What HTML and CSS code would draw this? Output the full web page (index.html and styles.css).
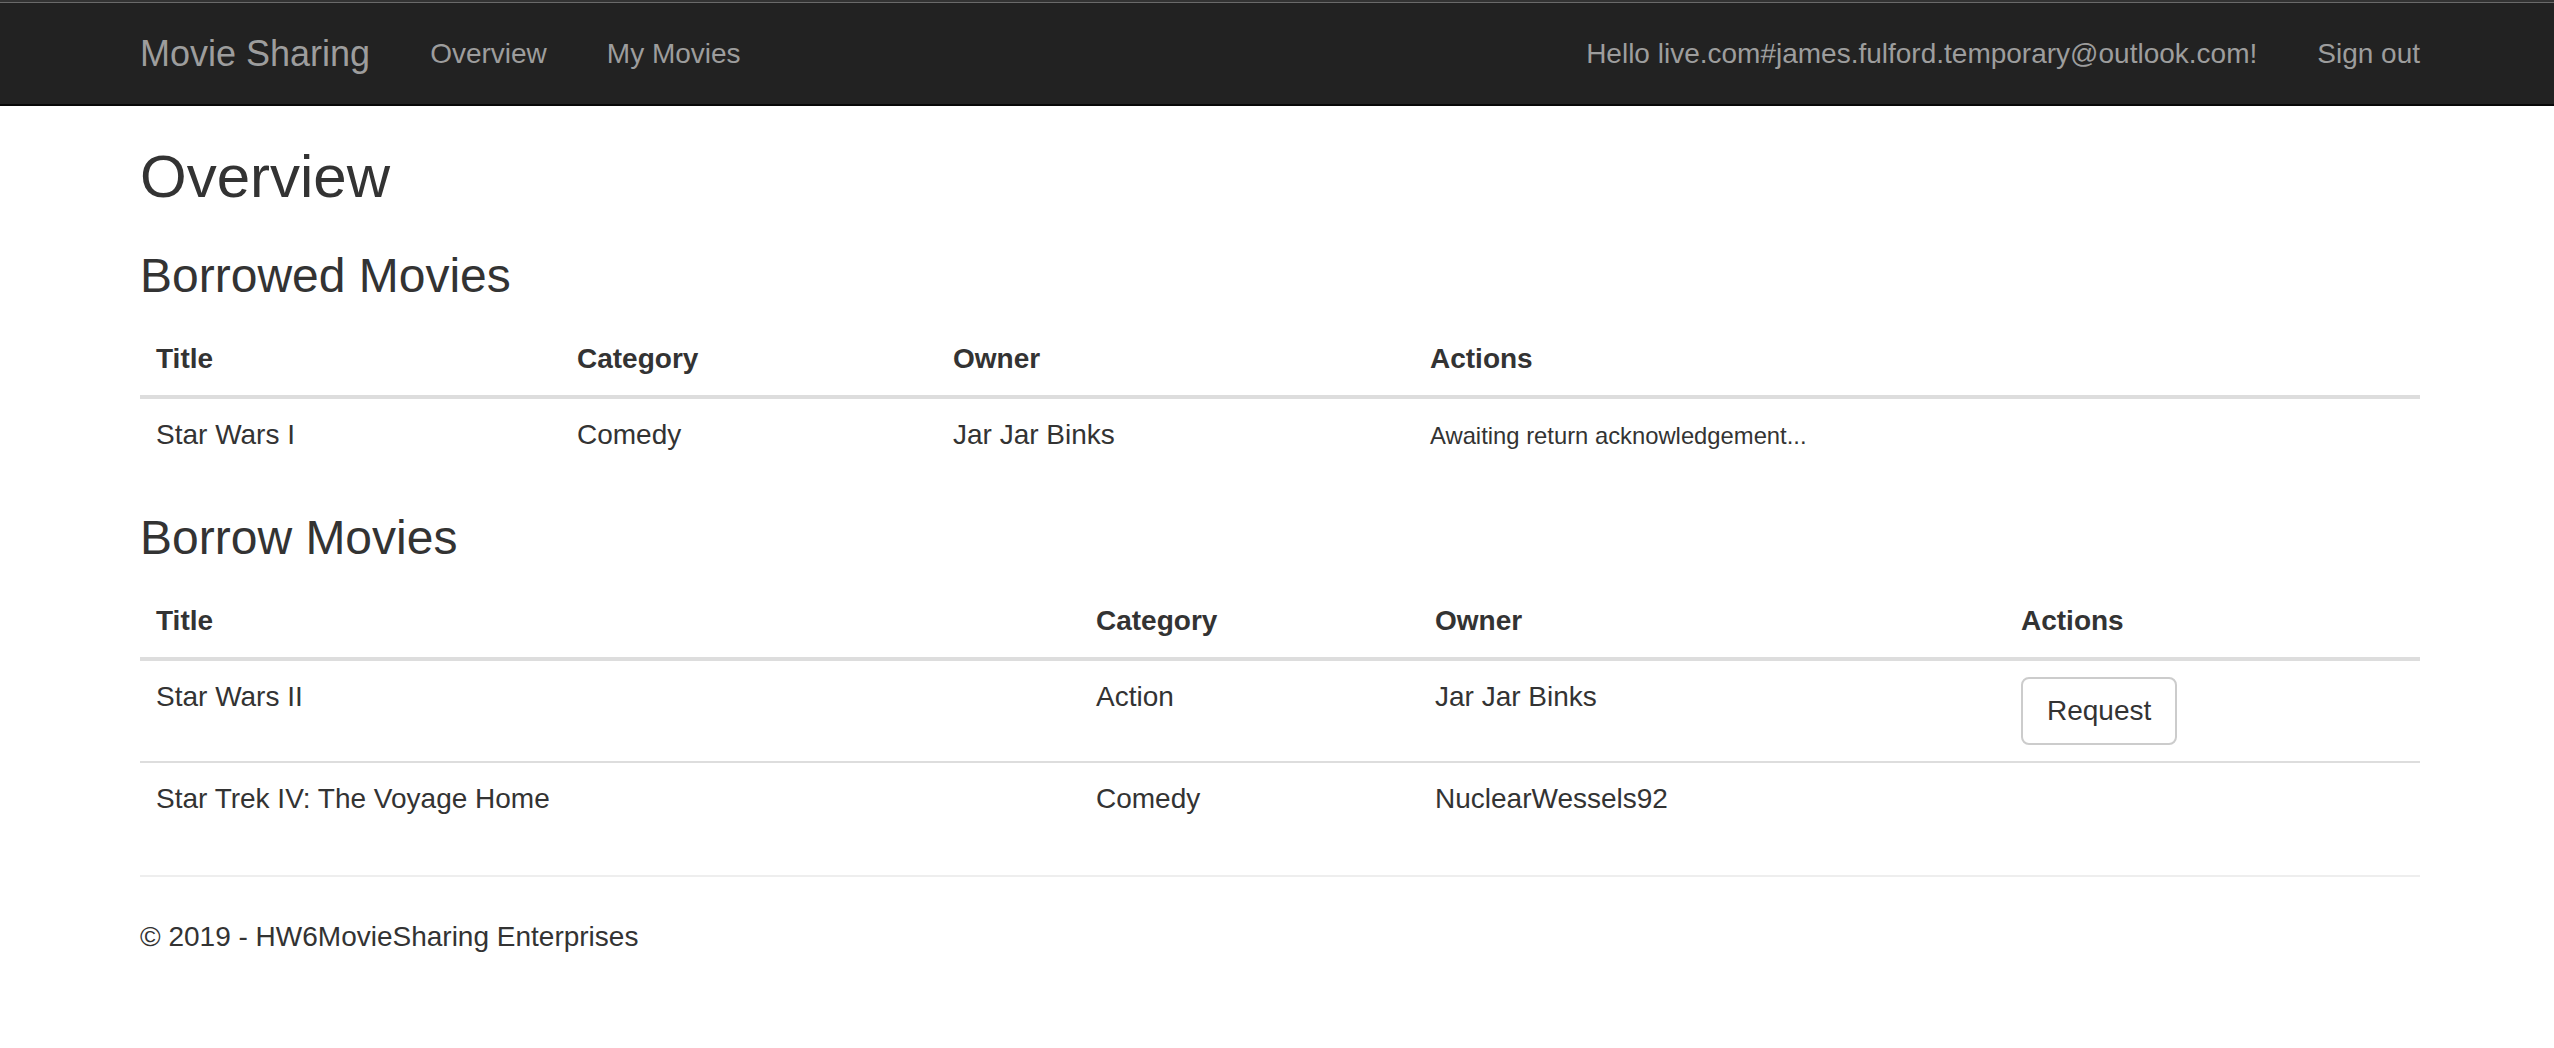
FILE: index.html
```html
<!DOCTYPE html>
<html lang="en">
<head>
<meta charset="utf-8">
<title>Overview - Movie Sharing</title>
<link rel="stylesheet" href="styles.css">
</head>
<body>
<div class="topstrip"></div>
<nav class="navbar">
  <div class="container navbar-inner">
    <a class="brand" href="#">Movie Sharing</a>
    <ul class="nav">
      <li><a href="#">Overview</a></li>
      <li><a href="#">My Movies</a></li>
    </ul>
    <ul class="nav nav-right">
      <li><a href="#">Hello live.com#james.fulford.temporary@outlook.com!</a></li>
      <li><a href="#">Sign out</a></li>
    </ul>
  </div>
</nav>
<div class="container body-content">
  <h2 class="page-title">Overview</h2>

  <h3 class="section-title">Borrowed Movies</h3>
  <table class="table">
    <colgroup>
      <col class="w421"><col class="w376"><col class="w477"><col>
    </colgroup>
    <thead>
      <tr><th>Title</th><th>Category</th><th>Owner</th><th>Actions</th></tr>
    </thead>
    <tbody>
      <tr><td>Star Wars I</td><td>Comedy</td><td>Jar Jar Binks</td><td><small>Awaiting return acknowledgement...</small></td></tr>
    </tbody>
  </table>

  <h3 class="section-title">Borrow Movies</h3>
  <table class="table">
    <colgroup>
      <col class="w940"><col class="w339"><col class="w586"><col>
    </colgroup>
    <thead>
      <tr><th>Title</th><th>Category</th><th>Owner</th><th>Actions</th></tr>
    </thead>
    <tbody>
      <tr><td>Star Wars II</td><td>Action</td><td>Jar Jar Binks</td><td><button class="btn" type="button">Request</button></td></tr>
      <tr><td>Star Trek IV: The Voyage Home</td><td>Comedy</td><td>NuclearWessels92</td><td></td></tr>
    </tbody>
  </table>

  <hr>
  <footer class="footer">
    <p>&copy; 2019 - HW6MovieSharing Enterprises</p>
  </footer>
</div>
</body>
</html>
```

FILE: styles.css
```css
* { box-sizing: border-box; }

html, body {
  margin: 0;
  padding: 0;
  background: #fff;
}

body {
  font-family: "Liberation Sans", Arial, Helvetica, sans-serif;
  font-size: 28px;
  line-height: 40px;
  color: #333;
}

.topstrip {
  height: 4px;
  background: linear-gradient(#333 0, #333 2px, #6a6a6a 2px, #6a6a6a 3px, #222 3px, #222 4px);
}

.container {
  width: 2340px;
  padding: 0 30px;
  margin-left: calc(50% - 1167px);
}

.navbar {
  background: #222;
  border-bottom: 2px solid #080808;
  height: 102px;
}

.navbar-inner {
  display: flex;
  align-items: flex-start;
  height: 100px;
}

.brand {
  display: block;
  margin-left: -30px;
  padding: 30px;
  font-size: 36px;
  line-height: 40px;
  height: 100px;
  color: #9d9d9d;
  text-decoration: none;
}

.nav {
  display: flex;
  list-style: none;
  margin: 0;
  padding: 0;
}

.nav a {
  display: block;
  padding: 30px;
  line-height: 40px;
  color: #9d9d9d;
  text-decoration: none;
}

.nav-right {
  margin-left: auto;
  margin-right: -30px;
}

.page-title {
  font-size: 60px;
  line-height: 66px;
  font-weight: 500;
  margin: 38px 0 20px;
}

.section-title {
  font-size: 48px;
  line-height: 52.8px;
  font-weight: 500;
  margin: 40px 0 20px;
}

.table {
  width: 100%;
  table-layout: fixed;
  border-collapse: collapse;
  border-spacing: 0;
  margin-bottom: 40px;
}

.w421 { width: 421px; }
.w376 { width: 376px; }
.w477 { width: 477px; }
.w940 { width: 940px; }
.w339 { width: 339px; }
.w586 { width: 586px; }

.table th,
.table td {
  padding: 16px;
  line-height: 40px;
  text-align: left;
  vertical-align: top;
}

.table th {
  font-weight: bold;
  vertical-align: bottom;
  border-bottom: 4px solid #ddd;
}

.table td {
  border-top: 2px solid #ddd;
}

.table small {
  font-size: 85%;
}

.btn {
  display: inline-block;
  font-family: inherit;
  font-size: 28px;
  line-height: 40px;
  padding: 12px 24px;
  color: #333;
  background: #fff;
  border: 2px solid #ccc;
  border-radius: 8px;
  vertical-align: middle;
  cursor: pointer;
}

hr {
  margin: 40px 0;
  border: 0;
  border-top: 2px solid #eee;
  height: 0;
}

.footer p {
  margin: 0 0 20px;
}
```
